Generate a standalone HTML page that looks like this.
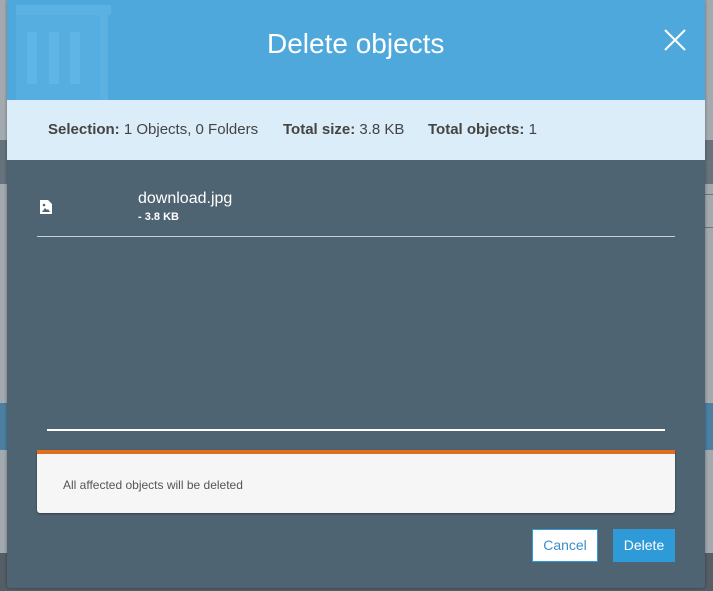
<!DOCTYPE html>
<html><head><style>
*{margin:0;padding:0;box-sizing:border-box}
body{width:713px;height:591px;overflow:hidden;background:#a3aaaf;font-family:"Liberation Sans",sans-serif;position:relative}
.abs{position:absolute}
.s{position:absolute;top:21px;white-space:nowrap}
</style></head><body>
<div class="abs" style="left:0;top:140px;width:713px;height:44px;background:#66737d"></div>
<div class="abs" style="left:0;top:403px;width:713px;height:47px;background:#4d7fa3"></div>
<div class="abs" style="left:0;top:553px;width:713px;height:38px;background:#555e66"></div>
<div class="abs" style="left:705px;top:162px;width:8px;height:1px;background:#6b7680"></div>
<div class="abs" style="left:705px;top:194px;width:8px;height:1px;background:#6b7680"></div>
<div class="abs" style="left:705px;top:227px;width:8px;height:1px;background:#6b7680"></div>
<div class="abs" style="left:7px;top:0;width:698px;height:588px;background:#4f6472;border-radius:0 0 3px 3px;box-shadow:0 0 3px rgba(0,0,0,.4)">
  <div class="abs" style="left:0;top:0;width:698px;height:100px;background:#4ea8dc;overflow:hidden">
    <svg class="abs" style="left:0;top:0" width="110" height="100">
      <rect x="9" y="5" width="95" height="10" fill="#5ab1e2"/>
      <rect x="9" y="15" width="84" height="85" fill="#56ade0"/>
      <rect x="20" y="32" width="10" height="52" fill="#5eb5e6"/>
      <rect x="42" y="32" width="10" height="52" fill="#5eb5e6"/>
      <rect x="63" y="32" width="10" height="52" fill="#5eb5e6"/>
      <rect x="93" y="15" width="8" height="85" fill="#5ab1e2"/>
    </svg>
    <div class="abs" style="left:260px;top:28px;color:#fff;font-size:28px;white-space:nowrap">Delete objects</div>
    <svg class="abs" style="left:657px;top:29px" width="22" height="22"><path d="M1 1L21 21M21 1L1 21" stroke="#fff" stroke-width="2"/></svg>
  </div>
  <div class="abs" style="left:0;top:100px;width:698px;height:60px;background:#dbedf8;color:#444;font-size:15px">
    <span class="s" style="left:41px"><b>Selection:</b> 1 Objects, 0 Folders</span>
    <span class="s" style="left:276px"><b>Total size:</b> 3.8 KB</span>
    <span class="s" style="left:421px"><b>Total objects:</b> 1</span>
  </div>
  <svg class="abs" style="left:32px;top:199px" width="14" height="16"><path d="M1 1H9L13 5V15H1Z" fill="#fff"/><path d="M3 13L6 9L8 11L9 10L11 13Z" fill="#4f6472"/><circle cx="5" cy="6" r="1.3" fill="#4f6472"/></svg>
  <div class="abs" style="left:131px;top:190px;color:#fff;font-size:16px">download.jpg</div>
  <div class="abs" style="left:131px;top:211px;color:#fff;font-size:11px;font-weight:bold">- 3.8 KB</div>
  <div class="abs" style="left:30px;top:236px;width:638px;height:1px;background:#c9d0d5"></div>
  <div class="abs" style="left:40px;top:429px;width:618px;height:2px;background:#fff"></div>
  <div class="abs" style="left:30px;top:450px;width:638px;height:63px;background:#f5f6f5;border-top:4px solid #e07020;border-radius:0 0 3px 3px;box-shadow:0 1px 2px rgba(0,0,0,.4)">
    <div style="padding:24px 0 0 26px;font-size:12px;color:#555">All affected objects will be deleted</div>
  </div>
  <div class="abs" style="left:525px;top:529px;width:66px;height:33px;background:#fff;border:1px solid #2e9ad8;color:#3a8fc8;font-size:14px;text-align:center;line-height:31px">Cancel</div>
  <div class="abs" style="left:606px;top:529px;width:62px;height:33px;background:#2e9ad8;color:#fff;font-size:14px;text-align:center;line-height:33px">Delete</div>
</div>
</body></html>
